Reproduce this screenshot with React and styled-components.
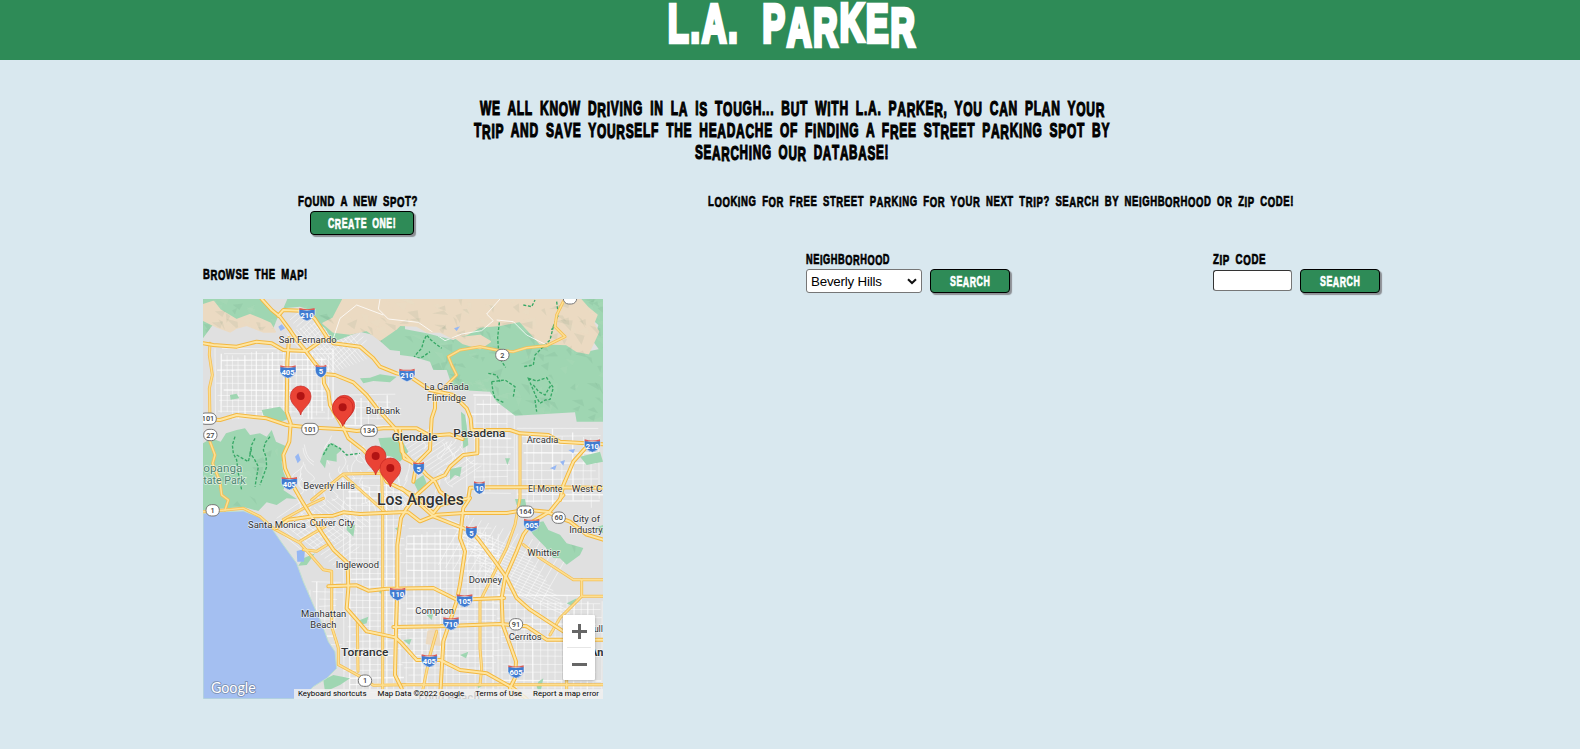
import React, { useLayoutEffect, useRef, useState } from "react";
import styled, { createGlobalStyle } from "styled-components";

const Global = createGlobalStyle`
  body { margin: 0; background: #d9e8ef; color: #000; overflow: hidden; }
  * { box-sizing: border-box; }
`;

const display = `"Liberation Sans Narrow", "Liberation Sans", sans-serif`;

/* ---------- poster lettering ---------- */

const drops = { A: -0.07, R: -0.08, O: -0.05, P: -0.04, I: -0.05, S: -0.03, T: 0.02, U: -0.03, K: 0.02, W: 0.02, C: -0.03, D: -0.01, N: 0.01, V: 0.01, L: -0.02 };

const Letter = styled.span`
  line-height: 0;
  vertical-align: ${(p) => p.$drop}em;
`;

const FitBox = styled.span`
  display: block;
  width: ${(p) => p.$width}px;
  height: ${(p) => p.$line}px;
  font: bold ${(p) => p.$size}px/${(p) => p.$line}px ${display};
  -webkit-text-stroke: ${(p) => p.$stroke}px currentColor;
  paint-order: stroke fill;
  letter-spacing: 0.06em;
  word-spacing: ${(p) => p.$gap}em;
  white-space: nowrap;
  text-align: left;
`;

const FitInner = styled.span`
  display: inline-block;
  transform-origin: 0 50%;
`;

function Poster({ text, width, size = 14.5, line = 18, stroke = 0.7, gap = 0.25 }) {
  const ref = useRef(null);
  const [ratio, setRatio] = useState(1);
  useLayoutEffect(() => {
    setRatio(width / ref.current.offsetWidth);
  }, [text, width]);
  return (
    <FitBox $width={width} $size={size} $line={line} $stroke={stroke} $gap={gap}>
      <FitInner ref={ref} style={{ transform: `scaleX(${ratio})` }}>
        {[...text].map((c, i) =>
          i > 0 && /[A-Z]/.test(text[i - 1]) && drops[c] ? (
            <Letter key={i} $drop={drops[c]}>{c}</Letter>
          ) : (
            c
          )
        )}
      </FitInner>
    </FitBox>
  );
}

/* ---------- page parts ---------- */

const Header = styled.header`
  height: 60px;
  background: #2e8b57;
  color: #fff;
  display: flex;
  justify-content: center;
  padding: 0 0 0 5px;
`;

const Intro = styled.section`
  display: flex;
  flex-direction: column;
  align-items: center;
  padding: 37px 0 0 4px;
`;

const Columns = styled.main`
  display: flex;
  padding: 29px 0 0 203px;
`;

const MapColumn = styled.section`
  width: 400px;
`;

const NewSpot = styled.div`
  padding-left: 95px;
  height: 73px;
`;

const Button = styled.button`
  display: flex;
  justify-content: center;
  align-items: center;
  width: ${(p) => p.$width}px;
  height: 24px;
  padding: 0 0 1px;
  margin: ${(p) => p.$margin || 0};
  border: 1px solid #000;
  border-radius: 4px;
  background: #2e8b57;
  color: #fff;
  box-shadow: 2px 2px 1px #8d9095;
`;

const SearchColumn = styled.section`
  padding-left: 105px;
`;

const Forms = styled.div`
  display: flex;
  gap: 203px;
  padding: 40px 0 0 98px;
`;

const Field = styled.form`
  display: flex;
  flex-direction: column;
  gap: 1px;
`;

const Controls = styled.div`
  display: flex;
  align-items: center;
  gap: 8px;
`;

const Select = styled.div`
  display: flex;
  align-items: center;
  justify-content: space-between;
  width: 116px;
  height: 24px;
  padding: 0 4px;
  border: 1px solid #767676;
  border-radius: 3px;
  background: #fff;
  font: 13.333px "Liberation Sans", Arial, sans-serif;
  letter-spacing: -0.2px;
`;

const ZipInput = styled.input`
  width: 79px;
  height: 21px;
  margin: 0 0 1px;
  border: 1px solid #767676;
  border-top-color: #333;
  border-left-color: #333;
  border-radius: 3px;
  background: #fff;
`;

const BrowseTitle = styled.div`
  height: 34px;
`;

/* ---------- map ---------- */

const MapFrame = styled.div`
  position: relative;
  width: 400px;
  height: 400px;
  overflow: hidden;
  background: #e0e0e0;
`;

const MapArt = styled.svg`
  display: block;
  width: 400px;
  height: 400px;
`;

const ZoomControl = styled.div`
  position: absolute;
  right: 8px;
  bottom: 19px;
  width: 32px;
  height: 65px;
  border-radius: 1px;
  background: #fff;
  box-shadow: 0 1px 3px rgba(0, 0, 0, 0.3);
`;

const Credits = styled.div`
  position: absolute;
  right: 0;
  bottom: 0;
  width: 309px;
  height: 10px;
  padding: 0 4px;
  display: flex;
  justify-content: space-between;
  align-items: center;
  background: rgba(240, 240, 240, 0.82);
  color: #000;
  font: 7.9px/10px Roboto, sans-serif;
  white-space: nowrap;
`;

const freeways = [
  "185,12 215,45 240,65 270,105 290,135 315,165 345,205 370,235 372,265 385,290 390,330 428,395 445,430 490,465 540,520 560,560 600,580 650,605",
  "370,237 405,240 460,262 500,300 535,345 585,400 605,450 612,490 656,512 680,540 705,560 720,590 755,615",
  "235,62 250,45 320,48 345,72 380,125 400,145 480,155 520,190 540,215 590,235 630,245 690,285 760,300 800,340 812,370 815,405 930,405 960,415 1045,420 1080,440 1209,448",
  "9,145 40,150 110,155 170,140 215,145 250,165 320,168 360,140 380,130",
  "9,372 60,375 110,360 200,370 260,390 320,397 430,403 470,408 550,400 650,400 690,422 750,418 788,432",
  "267,130 262,200 260,350 272,385 268,440 250,480 255,520 275,565 302,612 335,666 370,720 400,764 443,804 445,880 440,940 475,980 500,1009 585,1027 605,1045 650,1095 720,1095 780,1125 860,1135 940,1180 980,1212",
  "230,699 265,674 340,664 400,662 430,652 480,657 600,652 625,652 660,679 710,659 790,654 920,654 980,644 1040,650 1080,669 1110,680 1160,719 1209,734",
  "650,605 700,655 720,630 805,610 810,578 870,577 1000,577 1209,578",
  "832,410 832,475 790,480 750,515 735,540 700,555 650,600 620,640 603,669 592,750 592,880 588,1000 585,1140 605,1180",
  "605,580 640,610 700,664 750,684 815,709 840,739 885,799 920,849 950,909 990,944 1090,1009",
  "810,609 790,639 780,729 795,769 780,869 770,919 750,979 730,1039 720,1212",
  "385,874 470,871 505,887 560,881 700,879 770,914 912,909",
  "1090,600 1050,649 1000,679 970,719 950,769 915,849 905,909 908,989 930,1049 948,1099 945,1149 930,1179 935,1212",
  "580,996 720,994 900,987 980,994 1040,1034 1209,1034",
  "705,299 705,340 695,370 692,420 690,465 650,505 640,560",
  "1160,455 1120,500 1090,570 1080,615",
  "600,405 605,470 640,505",
];
const highways = [
  "30,145 28,180 37,240 28,280 30,370",
  "30,440 45,480 38,505 60,560 65,600 85,615 75,645",
  "9,650 40,648 75,645 130,640 180,665 220,700 300,744 370,824 395,829 395,994 415,1059 415,1109 480,1144 520,1171 615,1169",
  "705,299 745,265 770,240 755,210 745,185 780,165 840,155 890,165 940,170 980,158 1040,152 1095,125 1065,95 1070,60 1090,20",
  "335,615 430,537 545,535 548,650 548,1212",
  "250,674 330,629 370,610",
  "300,739 345,712 375,695",
  "310,764 350,769 380,750",
  "472,984 474,1129",
  "960,420 960,609 945,689 920,759 850,899 840,919 840,1060 845,1120 840,1169",
  "970,749 1020,789 1120,854 1209,854",
  "1145,854 1145,904 1209,904",
  "1145,904 1080,969 1050,1020",
  "600,1169 840,1169 1209,1169",
  "665,1200 690,1080 710,1009",
  "1100,1140 1100,1212",
  "430,540 520,620 560,655",
];
const green = [
  "9,12 185,12 235,62 220,100 170,70 110,95 60,60 9,130",
  "262,12 615,12 615,170 570,165 520,120 480,110 440,125 400,140 375,100 345,80 330,45 300,35 250,40",
  "600,100 680,115 760,135 840,95 960,78 1020,145 1100,150 1160,170 1209,160 1209,380 1130,380 1125,352 945,362 890,320 870,290 775,285 755,270 740,225 700,225 690,200 640,185 600,180",
  "1120,12 1209,12 1209,180 1180,140 1195,90 1150,50",
  "9,445 35,430 62,440 78,415 110,405 135,400 150,420 180,415 200,425 215,405 228,440 262,455 245,500 250,530 262,560 250,585 290,612 260,610 230,630 200,622 175,648 130,636 9,645",
  "535,430 600,425 625,470 600,500 575,485 550,480",
  "185,345 240,335 270,370 230,385 190,360",
  "480,250 510,248 540,238 590,245 570,262 520,258 490,265",
  "370,470 385,450 400,445 425,465 410,478 410,500 380,495 375,520 360,500",
  "980,689 1030,679 1045,705 1080,719 1100,745 1150,759 1140,780 1100,809 1080,790 1060,789 1035,755 1000,719",
  "640,560 670,540 680,565 655,590",
  "783,350 795,360 800,390 805,450 790,460 785,400",
  "1140,485 1200,470 1209,500 1160,510",
  "310,790 345,775 320,810 295,812",
  "440,690 465,690 460,725 440,705",
  "750,522 785,515 780,545 765,540 750,555",
  "945,612 975,612 980,639 950,630",
  "1100,925 1130,910 1120,935",
  "1010,1175 1015,1160 1030,1150 1020,1200",
  "370,1155 400,1140 450,1150 420,1170 375,1190",
  "780,1080 805,1070 798,1090",
  "1180,700 1209,690 1209,715",
  "90,300 110,296 118,310 92,314", "480,975 505,965 500,985 482,990", "610,1035 635,1032 628,1050", "915,490 930,490 922,510",
  "680,960 700,955 695,975", "830,1165 850,1170 835,1180", "535,890 550,885 548,900", "585,700 600,695 600,715",
];
const tan = [
  "9,30 40,20 60,45 85,60 110,75 150,60 180,72 210,85 225,110 190,110 140,90 110,98 90,110 50,95 9,75",
  "430,12 560,12 620,70 590,100 540,135 500,105 450,116 400,110 370,85 400,70",
  "560,12 1140,12 1165,40 1190,60 1180,85 1195,110 1165,175 1130,168 1100,148 1020,145 960,78 900,90 840,95 800,118 760,130 720,110 680,110 650,92 600,90",
  "770,130 840,122 870,140 840,160 790,145",
  "685,1010 710,1000 720,1050 680,1045",
];
const ocean = "9,655 70,650 130,648 175,665 215,700 250,750 290,805 310,860 340,930 365,985 385,1040 405,1070 410,1120 380,1150 340,1175 320,1195 325,1212 9,1212";

let seed = 7;
const rnd = () => {
  seed = (seed * 16807) % 2147483647;
  return seed / 2147483647;
};
const between = (a, b) => a + rnd() * (b - a);

const streets = [];
const addGrid = (x0, y0, x1, y1, step, w = 2) => {
  for (let x = x0; x <= x1; x += step * between(0.75, 1.25))
    streets.push([`M${x} ${y0 + between(0, 30)}L${x + between(-2, 2)} ${y1 - between(0, 30)}`, rnd() > 0.7 ? w + 2 : w]);
  for (let y = y0; y <= y1; y += step * between(0.75, 1.25))
    streets.push([`M${x0 + between(0, 30)} ${y}L${x1 - between(0, 30)} ${y + between(-3, 3)}`, rnd() > 0.7 ? w + 2 : w]);
};
addGrid(45, 160, 405, 375, 17);
addGrid(420, 300, 590, 400, 24);
addGrid(800, 300, 950, 600, 24);
addGrid(950, 400, 1209, 640, 27);
addGrid(430, 550, 620, 1212, 21);
addGrid(600, 700, 900, 1212, 19);
addGrid(880, 900, 1209, 1212, 22);
addGrid(330, 860, 430, 1060, 24);
for (let i = 0; i < 15; i++) {
  streets.push([`M${270 + i * 10} ${75 + i * 10}l${90} ${-80}`, 2]);
  streets.push([`M${260 + i * 10} ${115 - i * 4}l110 130`, 2]);
  streets.push([`M${225 + i * 13} ${700 - i * 7}l${105} ${85}`, 2]);
  streets.push([`M${230 + i * 12} ${670 + i * 10}l80 -55`, 2]);
  streets.push([`M${800 + i * 22} ${660 + i * 8}l-85 150`, 2]);
  streets.push([`M${740 + i * 10} ${670 + i * 14}l240 105`, 2]);
  streets.push([`M${600 + i * 11} ${460 + i * 8}l90 -60`, 2]);
}
for (let i = 0; i < 55; i++) {
  const x = between(290, 800), y = between(410, 620);
  streets.push([`M${x} ${y}q${between(-20, 20)} 15 ${between(-20, 20)} 30t${between(-25, 30)} 22`, 2]);
}
const relief = Array.from({ length: 420 }, () => {
  const x = between(9, 1209), y = between(12, rnd() > 0.4 ? 380 : 810);
  return {
    d: `M${x} ${y}l${between(10, 38)} ${between(-16, 10)}l${between(-12, 14)} ${between(12, 32)}z`,
    c: rnd() > 0.5 ? "#39785a" : "#e7f1d0",
  };
});
const lakes = [
  "235,95 245,88 255,100 242,108", "285,485 295,475 302,495 293,505", "1080,500 1095,495 1090,512",
  "1105,465 1125,462 1120,475", "290,768 315,762 312,800 292,800", "762,100 780,94 770,108", "1050,520 1070,510 1065,525",
];
const trails = [
  "M640 190l10 -14l15 -16l6 -22l9 -18l12 14l13 11l20 15", "M650 190l18 -4l22 -16", "M898 82l-5 45l4 60l20 30", "M1060 95l-10 40l-45 45l-5 30l-30 5",
  "M875 260l40 -5l30 20l-5 30M875 260l4 30l6 20l25 12", "M985 250l25 8l30 -10l20 30l-10 35l-14 2l-16 10l-12 -20l-8 -20zM1000 270l16 20l19 10l18 -30M1005 315l5 35",
  "M865 235l25 5l10 20", "M105 425l-8 25l3 25l10 20l5 40l10 50", "M165 430l-10 20l-5 25l12 15l13 25l-10 60", "M210 425l-14 18l-6 22l8 20l2 30l-20 55",
  "M110 480l35 20l10 -40", "M970 30l25 5l10 -20M1070 20l5 40l-20 45",
];
const interstates = [
  [210, 321, 58], [5, 363, 228], [405, 264, 230], [405, 268, 565], [210, 621, 240], [210, 1177, 452], [5, 656, 520], [10, 838, 578],
  [5, 814, 712], [605, 995, 690], [105, 794, 917], [710, 753, 986], [405, 688, 1097], [605, 948, 1130], [110, 593, 897],
];
const ovals = [
  [101, 24, 371], [27, 31, 420], [101, 330, 402], [134, 507, 407], [2, 907, 180], [1, 38, 646], [1, 495, 1157], [164, 976, 650],
  [60, 1076, 668], [91, 948, 988], ["", 1110, 10],
];
const labels = [
  ["San Fernando", 236, 143, 174], ["Burbank", 497, 357, 103], ["Beverly Hills", 310, 583, 155], ["Glendale", 575, 439, 138, 34, 500],
  ["Pasadena", 760, 426, 156, 34, 500], ["La Cañada", 673, 285, 134], ["Flintridge", 680, 319, 118], ["Arcadia", 980, 443, 95],
  ["El Monte", 984, 591, 103], ["West C", 1115, 591, 92], ["opanga", 10, 530, 117, 32, 400, "#4f8672"], ["tate Park", 10, 567, 127, 30, 400, "#4f8672"],
  ["Los Angeles", 531, 631, 261, 47, 500], ["Santa Monica", 144, 698, 174], ["Culver City", 329, 692, 134], ["Inglewood", 407, 818, 130],
  ["Manhattan", 303, 965, 136], ["Beach", 331, 998, 78], ["Torrance", 423, 1082, 142, 34, 500], ["City of", 1118, 680, 82],
  ["Industry", 1108, 713, 100], ["Whittier", 982, 782, 98], ["Downey", 806, 863, 100], ["Compton", 646, 957, 116], ["Cerritos", 926, 1036, 99],
  ["ull", 1181, 1012, 28], ["An", 1170, 1082, 40, 33, 700], ["Long Beach", 655, 1222, 185, 36, 500],
];

const Pin = ({ x, y }) => (
  <g transform={`translate(${x} ${y})`}>
    <path d="M0 0C-4 -20 -31 -30 -31 -56A31 31 0 0 1 31 -56C31 -30 4 -20 0 0Z" fill="#ea4335" stroke="#c5221f" strokeWidth="2" />
    <circle cy="-57" r="12" fill="#b11313" />
  </g>
);

const lines = (list, width, color) =>
  list.map((p, i) => <polyline key={color + i} points={p} fill="none" stroke={color} strokeWidth={width} strokeLinejoin="round" strokeLinecap="round" />);

function LosAngelesMap() {
  return (
    <MapArt viewBox="9 12 1200 1200">
      <defs>
        <clipPath id="hills">
          {[...green.slice(0, 6), ...tan.slice(0, 4), green[9]].map((p, i) => <polygon key={i} points={p} />)}
        </clipPath>
      </defs>
      <rect x="9" y="12" width="1200" height="1200" fill="#e0e0e0" />
      {streets.map(([d, w], i) => <path key={i} d={d} fill="none" stroke="#fff" strokeWidth={w} opacity="0.75" />)}
      {green.map((p, i) => <polygon key={i} points={p} fill="#9fd6b2" />)}
      {tan.map((p, i) => <polygon key={i} points={p} fill="#ebdac2" stroke="#ebdac2" strokeWidth="6" strokeLinejoin="round" />)}
      <g clipPath="url(#hills)">
        {relief.map((r, i) => <path key={i} d={r.d} fill={r.c} opacity="0.07" />)}
        {trails.map((d, i) => <path key={i} d={d} fill="none" stroke="#37a866" strokeWidth="4" strokeDasharray="9 5" />)}
        <path d="M540 12l-5 30l30 30l90 10l80 55l50 -20l60 -10l35 -30l-20 -20l40 -45M890 75l50 5l40 40l60 30M400 130l20 -60l50 -40l80 30" fill="none" stroke="#fff" strokeWidth="3" opacity="0.8" />
      </g>
      <path d="M370 480l20 -35l30 15l20 20l40 -5" fill="none" stroke="#37a866" strokeWidth="4" strokeDasharray="9 5" />
      <polygon points={ocean} fill="#a4bff1" stroke="#bfe0cf" strokeWidth="3" />
      {lakes.map((p, i) => <polygon key={i} points={p} fill="#96b7f3" />)}
      {lines(highways, 9, "#f4bf55")}
      {lines(highways, 4.5, "#fddf91")}
      {lines(freeways, 12, "#f3b840")}
      {lines(freeways, 6, "#fee5a1")}
      {interstates.map(([n, x, y], i) => (
        <g key={i} transform={`translate(${x} ${y})`}>
          <path d={n < 100 ? "M-17 -16Q0 -8 17 -16V0Q15 14 0 20Q-15 14 -17 0Z" : "M-24 -16Q0 -8 24 -16V0Q18 15 0 20Q-18 15 -24 0Z"} fill="#3f7bd0" stroke="#fff" strokeWidth="1.5" />
          <path d={n < 100 ? "M-16 -19Q0 -12 16 -19V-13H-16Z" : "M-23 -19Q0 -12 23 -19V-13H-23Z"} fill="#dc5c55" />
          <text y="10" fontSize="23" fontWeight="700" textAnchor="middle" fill="#fff" fontFamily="Roboto, sans-serif">{n}</text>
        </g>
      ))}
      {ovals.map(([n, x, y], i) => {
        const w = String(n).length > 2 ? 25 : 20;
        return (
          <g key={i} transform={`translate(${x} ${y})`}>
            <rect x={-w} y="-17" width={w * 2} height="34" rx="16" fill="#fff" stroke="#777" strokeWidth="3" />
            <text y="8" fontSize="22" fontWeight="500" textAnchor="middle" fill="#444" fontFamily="Roboto, sans-serif">{n}</text>
          </g>
        );
      })}
      {labels.map(([t, x, y, w, s = 29, b = 400, c = "#303234"]) => (
        <text key={t} x={x} y={y} textLength={w} lengthAdjust="spacingAndGlyphs" fontSize={s} fontWeight={b} fill={c} stroke="#fff" strokeWidth="4" strokeOpacity="0.65" paintOrder="stroke" fontFamily="Roboto, sans-serif">{t}</text>
      ))}
      <Pin x={302} y={360} />
      <Pin x={433} y={388} />
      <Pin x={428} y={394} />
      <Pin x={527} y={540} />
      <Pin x={571} y={576} />
      <text x="33" y="1193" textLength="134" lengthAdjust="spacingAndGlyphs" fontSize="44" fontWeight="400" fill="#fff" stroke="#6f7f9e" strokeWidth="5" strokeOpacity="0.8" paintOrder="stroke" fontFamily="Lato, sans-serif">Google</text>
    </MapArt>
  );
}

export default function App() {
  return (
    <>
      <Global />
      <Header>
        <Poster text="L.A. PARKER" width={249} size={53} line={48} stroke={4.5} gap={0.34} />
      </Header>
      <Intro>
        <Poster text="WE ALL KNOW DRIVING IN LA IS TOUGH... BUT WITH L.A. PARKER, YOU CAN PLAN YOUR" width={625} size={20} line={22} stroke={1.2} />
        <Poster text="TRIP AND SAVE YOURSELF THE HEADACHE OF FINDING A FREE STREET PARKING SPOT BY" width={636} size={20} line={22} stroke={1.2} />
        <Poster text="SEARCHING OUR DATABASE!" width={194} size={20} line={22} stroke={1.2} />
      </Intro>
      <Columns>
        <MapColumn>
          <NewSpot>
            <Poster text="FOUND A NEW SPOT?" width={120} />
            <Button $width={104} $margin="1px 0 0 12px">
              <Poster text="CREATE ONE!" width={68} />
            </Button>
          </NewSpot>
          <BrowseTitle>
            <Poster text="BROWSE THE MAP!" width={105} />
          </BrowseTitle>
          <MapFrame>
            <LosAngelesMap />
            <ZoomControl>
              <svg width="32" height="65" viewBox="0 0 32 65">
                <path d="M9 16.5H24M16.5 9V24M9 49.5H24" stroke="#666" strokeWidth="3" />
                <path d="M4 32.5H28" stroke="#e6e6e6" />
              </svg>
            </ZoomControl>
            <Credits>
              <span>Keyboard shortcuts</span>
              <span>Map Data ©2022 Google</span>
              <span>Terms of Use</span>
              <span>Report a map error</span>
            </Credits>
          </MapFrame>
        </MapColumn>
        <SearchColumn>
          <Poster text="LOOKING FOR FREE STREET PARKING FOR YOUR NEXT TRIP? SEARCH BY NEIGHBORHOOD OR ZIP CODE!" width={586} />
          <Forms>
            <Field>
              <Poster text="NEIGHBORHOOD" width={84} />
              <Controls>
                <Select>
                  Beverly Hills
                  <svg width="10" height="7" viewBox="0 0 10 7">
                    <path d="M1 1.2L5 5L9 1.2" fill="none" stroke="#111" strokeWidth="2" />
                  </svg>
                </Select>
                <Button type="button" $width={80}>
                  <Poster text="SEARCH" width={40} />
                </Button>
              </Controls>
            </Field>
            <Field>
              <Poster text="ZIP CODE" width={53} />
              <Controls>
                <ZipInput aria-label="Zip code" />
                <Button type="button" $width={80}>
                  <Poster text="SEARCH" width={40} />
                </Button>
              </Controls>
            </Field>
          </Forms>
        </SearchColumn>
      </Columns>
    </>
  );
}
